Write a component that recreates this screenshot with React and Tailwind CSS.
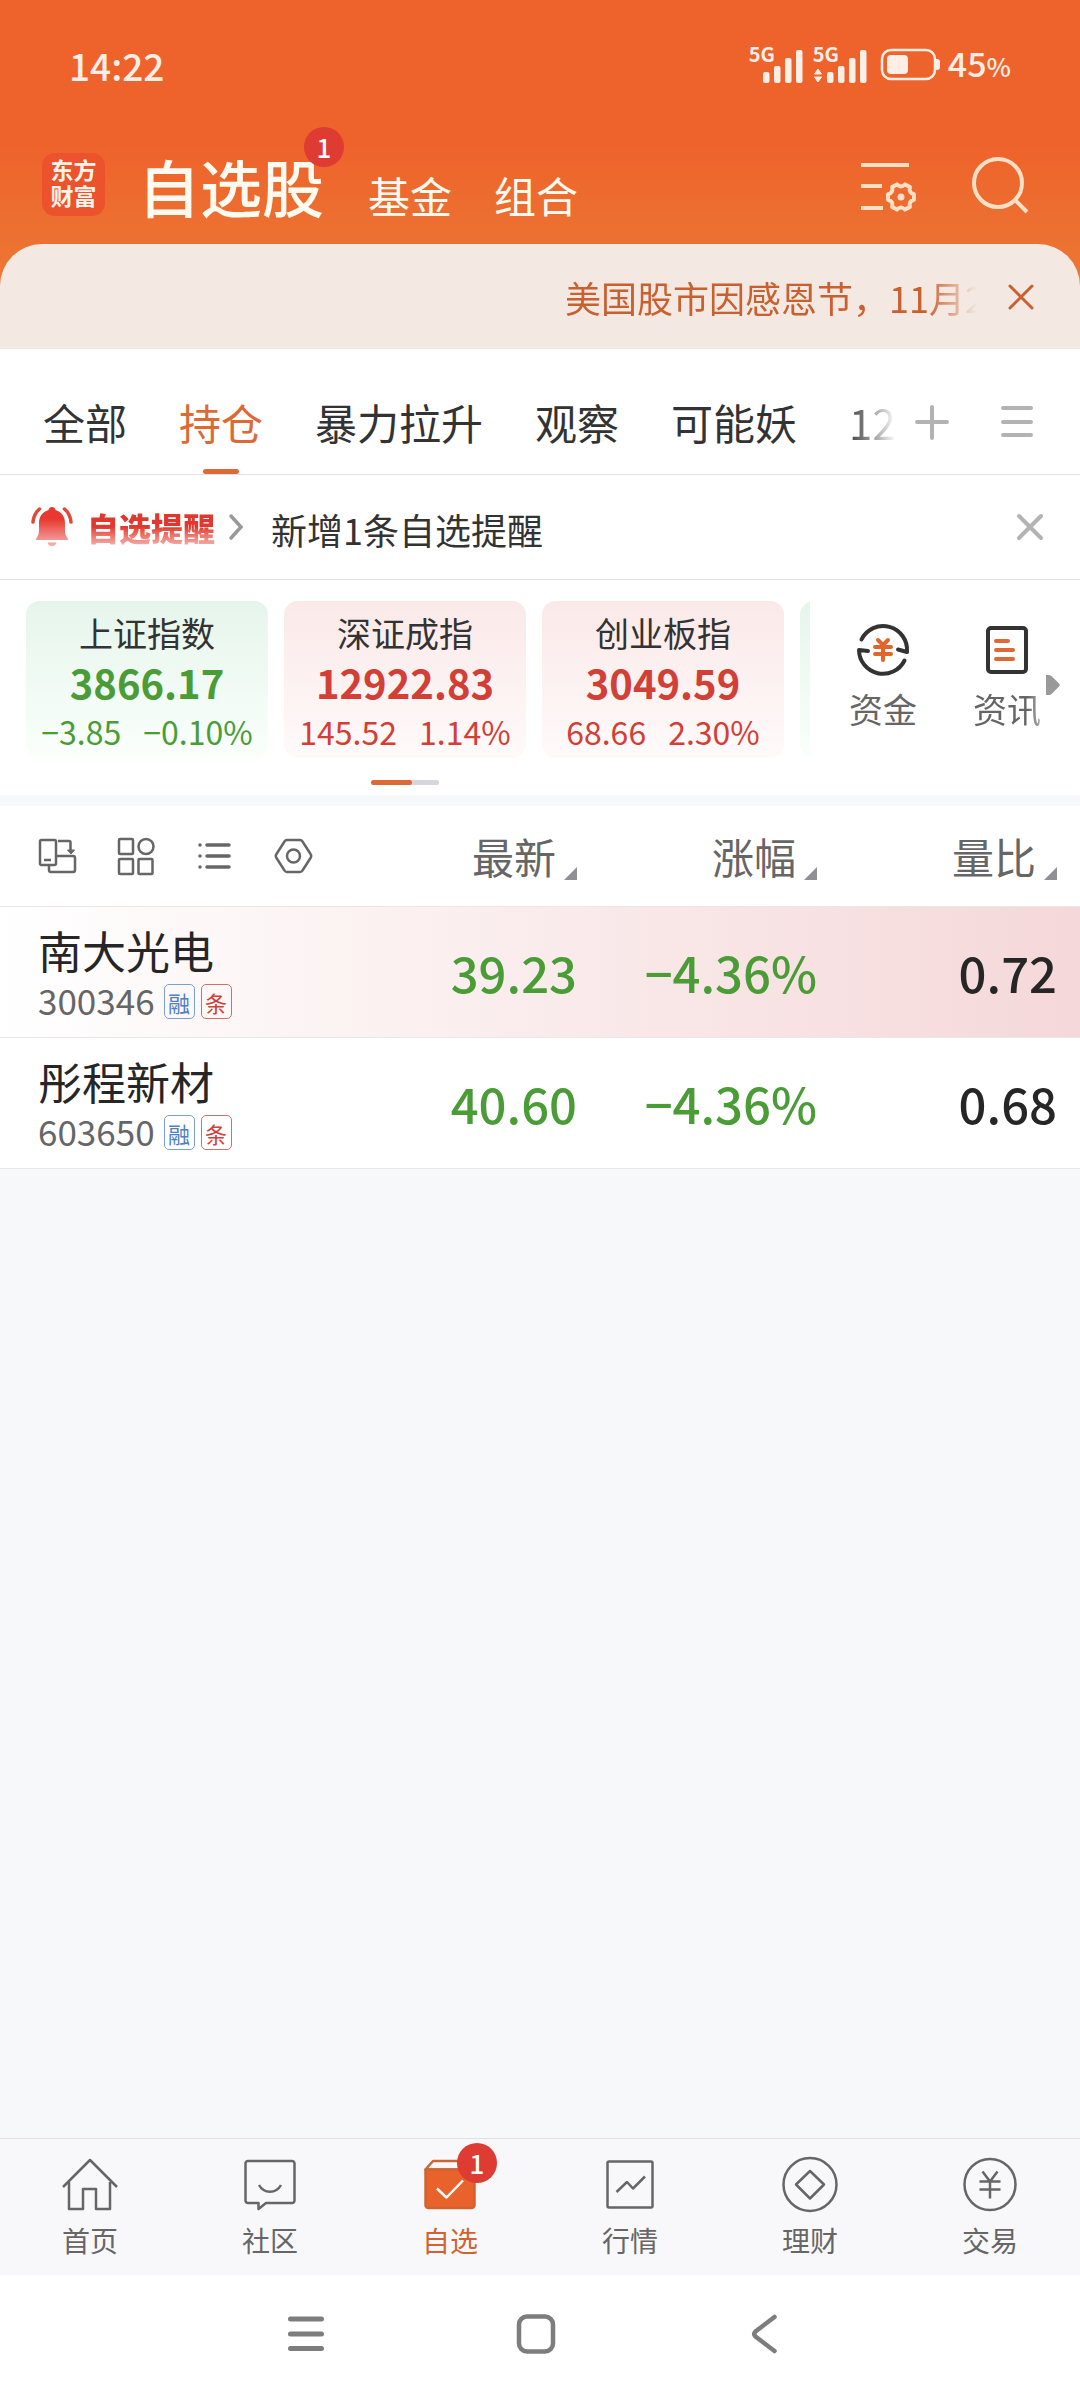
const indices = [
  { name: "上证指数", value: "3866.17", change: "−3.85", percent: "−0.10%", up: false },
  { name: "深证成指", value: "12922.83", change: "145.52", percent: "1.14%", up: true },
  { name: "创业板指", value: "3049.59", change: "68.66", percent: "2.30%", up: true },
];

const stocks = [
  { name: "南大光电", code: "300346", price: "39.23", percent: "−4.36%", ratio: "0.72", flash: true },
  { name: "彤程新材", code: "603650", price: "40.60", percent: "−4.36%", ratio: "0.68", flash: false },
];

const groups = ["全部", "持仓", "暴力拉升", "观察", "可能妖"];

function Signal({ active }) {
  return (
    <div className="relative h-9 w-[55px]">
      <span className="absolute left-0 -top-[3px] text-[20px] font-bold leading-5">5G</span>
      <svg className="absolute inset-0" width="55" height="36" viewBox="0 0 55 36" fill="currentColor" aria-hidden="true">
        {active && <path d="M5 22l3.500 5h-7zM5 35l3.500-5h-7z" stroke="currentColor" strokeLinejoin="round" />}
        <rect x="14" y="25" width="6.5" height="11" rx="2" />
        <rect x="25" y="19" width="6.5" height="17" rx="2" />
        <rect x="36" y="11" width="6.5" height="25" rx="2" />
        <rect x="47" y="3" width="6.5" height="33" rx="2" />
      </svg>
    </div>
  );
}

function StatusBar() {
  return (
    <div className="flex items-center justify-between px-[69px] pt-[41px] text-[#ffeee6]">
      <span className="text-[37px] font-medium leading-[44px]">14:22</span>
      <div className="flex items-center">
        <div className="flex gap-[9px]">
          <Signal />
          <Signal active />
        </div>
        <svg className="ml-3" width="60" height="34" viewBox="0 0 60 34" aria-hidden="true">
          <rect x="2" y="2" width="53" height="29" rx="9" fill="none" stroke="currentColor" strokeWidth="2.5" />
          <rect x="7" y="7" width="21" height="19" rx="4" fill="currentColor" />
          <path d="M56 11h1a3 3 0 0 1 3 3v5a3 3 0 0 1-3 3h-1z" fill="currentColor" />
        </svg>
        <span className="ml-2 text-[34px] font-medium leading-[44px]">
          45<span className="text-[26px]">%</span>
        </span>
      </div>
    </div>
  );
}

function Badge({ className }) {
  return (
    <span
      className={`absolute flex h-10 w-10 items-center justify-center rounded-full bg-[#de3b33] text-[26px] font-medium leading-none text-white ${className}`}
    >
      1
    </span>
  );
}

function TitleBar() {
  return (
    <div className="flex items-center pb-[13px] pl-[42px] pr-[48px] pt-[53px]">
      <div className="mb-1 flex h-[63px] w-[63px] flex-col items-center justify-center rounded-[13px] bg-[#ec522b] pb-1 text-[23px] font-bold leading-[26px] text-[#fff3ea]">
        <span>东方</span>
        <span>财富</span>
      </div>
      <nav className="ml-[33px] flex flex-1 items-baseline text-[#fffaf0]">
        <a href="#watch" className="relative text-[62px] font-medium leading-[90px]">
          自选股
          <Badge className="-top-[14px] left-[166px]" />
        </a>
        <a href="#fund" className="ml-[44px] text-[42px]">
          基金
        </a>
        <a href="#portfolio" className="ml-[42px] text-[42px]">
          组合
        </a>
      </nav>
      <button type="button" aria-label="管理" className="text-[#ffe0c6]">
        <svg width="60" height="60" viewBox="0 0 60 60" fill="none" stroke="currentColor" strokeWidth="4">
          <path d="M3 9h48M3 30h21M3 52h22" />
          <path
            d="M47 28.400L51.900 31.100Q50.400 36.800 56 38.200V43.800Q50.400 45.200 51.900 50.900L47 53.600Q43 49.500 39 53.600L34.100 50.900Q35.600 45.200 30 43.800V38.200Q35.600 36.800 34.100 31.100L39 28.400Q43 32.500 47 28.400Z"
            strokeLinejoin="round"
          />
          <circle cx="43" cy="41" r="3.5" fill="currentColor" stroke="none" />
        </svg>
      </button>
      <button type="button" aria-label="搜索" className="ml-[54px] text-[#ffe0c6]">
        <svg width="60" height="60" viewBox="0 0 60 60" fill="none" stroke="currentColor" strokeWidth="4">
          <circle cx="26" cy="27" r="24" />
          <path d="M42 43l13 13" />
        </svg>
      </button>
    </div>
  );
}

function Cross({ size, width }) {
  return (
    <svg width={size} height={size} viewBox="0 0 28 28" fill="none" stroke="currentColor" strokeWidth={width} strokeLinecap="round">
      <path d="M3 3l22 22M25 3L3 25" />
    </svg>
  );
}

function Ticker() {
  return (
    <div className="flex h-[105px] items-center rounded-t-[42px] bg-[#f3e8e2] pr-[45px] text-[#c9602f]">
      <p className="ml-auto whitespace-nowrap text-[36px] leading-[56px] [mask-image:linear-gradient(to_right,black_86%,transparent_98%)]">
        美国股市因感恩节，11月2
      </p>
      <button type="button" aria-label="关闭公告" className="ml-[22px]">
        <Cross size={28} width={3} />
      </button>
    </div>
  );
}

function GroupTabs() {
  return (
    <div className="flex h-[126px] items-center border-b border-[#e3e3e3] bg-white pt-5">
      <div className="flex h-full flex-1 gap-[52px] overflow-hidden pl-[43px] text-[42px] text-[#333]">
        {groups.map((g) => (
          <button key={g} type="button" className={`relative shrink-0 ${g === "持仓" ? "text-[#dd6a35]" : ""}`}>
            {g}
            {g === "持仓" && (
              <span className="absolute bottom-0 left-1/2 h-[5px] w-9 -translate-x-1/2 rounded-full bg-[#dd6a35]" />
            )}
          </button>
        ))}
        <button type="button" className="shrink-0 bg-linear-to-r from-[#444] to-white bg-clip-text text-transparent">
          12
        </button>
      </div>
      <button type="button" aria-label="添加分组" className="ml-4 text-[#b3b3b3]">
        <svg width="38" height="38" viewBox="0 0 38 38" fill="none" stroke="currentColor" strokeWidth="4" strokeLinecap="round">
          <path d="M19 4v31M4 19h30" />
        </svg>
      </button>
      <button type="button" aria-label="分组列表" className="ml-12 mr-[45px] text-[#b3b3b3]">
        <svg width="36" height="38" viewBox="0 0 36 38" fill="none" stroke="currentColor" strokeWidth="4" strokeLinecap="round">
          <path d="M4 5h28M4 19h28M4 32h28" />
        </svg>
      </button>
    </div>
  );
}

function AlertRow() {
  return (
    <div className="flex h-[105px] items-center border-b border-[#e3e3e3] bg-white pl-[30px] pr-9">
      <svg width="44" height="44" viewBox="0 0 44 44" aria-hidden="true">
        <defs>
          <linearGradient id="bell" x1="0" y1="0" x2="0" y2="1">
            <stop offset="0.3" stopColor="#e8382f" />
            <stop offset="1" stopColor="#f3b5b2" />
          </linearGradient>
        </defs>
        <path
          d="M22 2c2 0 3 1 3.500 3C32 7 35 12 35 18v8c0 4 2 6 3.500 9h-33C7 32 9 30 9 26v-8c0-6 3-11 9.500-13C19 3 20 2 22 2zM17.500 37.500h9c-1 5-8 5-9 0z"
          fill="url(#bell)"
        />
        <path d="M9.500 4C6 7 3.500 12 3 17M34.500 4C38 7 40.500 12 41 17" fill="none" stroke="#dd4a3c" strokeWidth="3.5" strokeLinecap="round" />
      </svg>
      <span className="ml-[13px] bg-linear-to-b from-[#e0382e] from-50% to-[#f3b5b2] to-95% bg-clip-text text-[32px] font-black leading-[44px] text-transparent">
        自选提醒
      </span>
      <svg className="ml-[13px]" width="16" height="28" viewBox="0 0 16 28" fill="none" stroke="#999" strokeWidth="3.5" strokeLinecap="round">
        <path d="M3 3l10 11L3 25" />
      </svg>
      <a href="#alerts" className="ml-[27px] flex-1 pt-1 text-[36px] text-[#333]">
        新增1条自选提醒
      </a>
      <button type="button" aria-label="关闭提醒" className="text-[#b3b3b3]">
        <Cross size={28} width={4} />
      </button>
    </div>
  );
}

function IndexCard({ item }) {
  return (
    <a
      href="#index"
      className={`flex w-[242px] shrink-0 flex-col items-center rounded-[14px] bg-linear-to-b pt-[9px] ${
        item.up ? "from-[#fae9e8] to-[#fffafa] text-[#d23f37]" : "from-[#e6f5ec] to-[#fafffb] text-[#4a9c37]"
      }`}
    >
      <span className="text-[34px] leading-[46px] text-[#333]">{item.name}</span>
      <span className="text-[40px] font-bold leading-[52px]">{item.value}</span>
      <span className="flex gap-[22px] text-[32px] leading-[46px]">
        <span>{item.change}</span>
        <span>{item.percent}</span>
      </span>
    </a>
  );
}

function IndexStrip() {
  return (
    <section className="flex bg-white">
      <div className="flex-1 overflow-hidden pl-[26px] pt-[21px]">
        <div className="flex h-[157px] gap-4">
          {indices.map((item) => (
            <IndexCard key={item.name} item={item} />
          ))}
          <div className="w-[242px] shrink-0 rounded-[14px] bg-linear-to-b from-[#e6f5ec] to-[#fafffb]" />
        </div>
        <div className="mb-[10px] mr-[26px] mt-[22px] flex justify-center">
          <div className="h-[5px] w-[68px] rounded-full bg-[#d5d5db]">
            <div className="h-full w-[41px] rounded-full bg-[#dd6a35]" />
          </div>
        </div>
      </div>
      <div className="relative flex w-[270px] shrink-0 gap-14 pl-[39px] pt-[42px] text-[34px] leading-[44px] text-[#666]">
        <a href="#money" className="flex flex-col items-center">
          <svg width="56" height="56" viewBox="0 0 56 56" fill="none" stroke="#333" strokeWidth="4" strokeLinecap="round" strokeLinejoin="round">
            <path d="M6.500 17.500A24 24 0 0 1 52 30l-9-2.500M49.500 38.500A24 24 0 0 1 4 28l9 1" />
            <path d="M23 18l5 5 5-5M20 25h16M20 32h16M28 24v14" stroke="#e2652c" />
          </svg>
          <span className="mt-[9px]">资金</span>
        </a>
        <a href="#news" className="flex flex-col items-center [mask-image:linear-gradient(to_right,black_80%,#0008)]">
          <svg width="56" height="56" viewBox="0 0 56 56" fill="none" stroke="#333" strokeWidth="4" strokeLinecap="round" strokeLinejoin="round">
            <rect x="9" y="6" width="38" height="44" rx="3" />
            <path d="M17 19h12M17 28h17M17 37h17" stroke="#dd6a35" />
          </svg>
          <span className="mt-[9px]">资讯</span>
        </a>
        <svg className="absolute right-5 top-[94px]" width="14" height="22" viewBox="0 0 14 22" fill="#999" aria-hidden="true">
          <path d="M0 1h3c1 0 2 .5 3 1.500l7 7c1 1 1 2 0 3l-7 7c-1 1-2 1.500-3 1.500H0z" />
        </svg>
      </div>
    </section>
  );
}

function Tag({ children, className }) {
  return (
    <span className={`mt-1 flex h-[35px] w-[31px] items-center justify-center rounded-[5px] border text-[22px] leading-none ${className}`}>
      {children}
    </span>
  );
}

function SortHeader({ label }) {
  return (
    <th className="w-[240px] pr-[23px] font-normal">
      <button type="button" className="flex w-full items-end justify-end gap-[8px]">
        <span className="text-[42px] leading-[56px]">{label}</span>
        <svg className="mb-1" width="13" height="13" viewBox="0 0 13 13" fill="#8f8f94" aria-hidden="true">
          <path d="M13 0v13H0z" />
        </svg>
      </button>
    </th>
  );
}

function StockTable() {
  return (
    <table className="mt-[11px] w-full table-fixed border-collapse bg-white">
      <thead>
        <tr className="h-[100px] border-b border-[#e8e8e8] text-[#666]">
          <th className="pl-[37px]">
            <div className="flex items-center gap-[39px]">
              <button type="button" aria-label="横屏">
                <svg width="40" height="40" viewBox="0 0 40 40" fill="none" stroke="currentColor" strokeWidth="2.5" strokeLinejoin="round">
                  <rect x="3" y="4" width="16" height="25" rx="1.5" />
                  <path d="M7 24h7M21 5h11a1.500 1.500 0 0 1 1.500 1.500V15M12 30v4a2 2 0 0 0 2 2h22a2 2 0 0 0 2-2V22a2 2 0 0 0-2-2H19" />
                  <path d="M30.500 14h7l-3.500 4z" fill="currentColor" strokeWidth="1" />
                </svg>
              </button>
              <button type="button" aria-label="宫格">
                <svg width="40" height="40" viewBox="0 0 40 40" fill="none" stroke="currentColor" strokeWidth="2.5" strokeLinejoin="round">
                  <rect x="3" y="3" width="14" height="15" rx="1" />
                  <circle cx="30" cy="10.5" r="7.5" />
                  <rect x="3" y="23" width="14" height="15" rx="1" />
                  <rect x="22.5" y="23" width="14" height="15" rx="1" />
                </svg>
              </button>
              <button type="button" aria-label="列表">
                <svg width="40" height="40" viewBox="0 0 40 40" fill="none" stroke="currentColor" strokeWidth="3.5" strokeLinecap="round">
                  <path d="M12 9h22M12 20h22M12 31h22M5 9v.1M5 20v.1M5 31v.1" />
                </svg>
              </button>
              <button type="button" aria-label="设置">
                <svg width="40" height="40" viewBox="0 0 40 40" fill="none" stroke="currentColor" strokeWidth="2.5" strokeLinejoin="round">
                  <path d="M13 4h13a3 3 0 0 1 2.500 1.500l8 12.500a3.500 3.500 0 0 1 0 4l-8 12.500A3 3 0 0 1 26 36H13a3 3 0 0 1-2.500-1.500l-8-12.500a3.500 3.500 0 0 1 0-4l8-12.500A3 3 0 0 1 13 4z" />
                  <circle cx="19.5" cy="20" r="6.5" />
                </svg>
              </button>
            </div>
          </th>
          <SortHeader label="最新" />
          <SortHeader label="涨幅" />
          <SortHeader label="量比" />
        </tr>
      </thead>
      <tbody>
        {stocks.map((s) => (
          <tr
            key={s.code}
            className={`h-[131px] border-b border-[#e8e8e8] text-right text-[49px] font-medium text-[#4a9c37] ${
              s.flash ? "bg-linear-to-r from-white to-[#f5d8d9]" : ""
            }`}
          >
            <td className="pl-[38px] pt-[6px] text-left font-normal">
              <div className="text-[44px] leading-[50px] text-[#262626]">{s.name}</div>
              <div className="flex items-center text-[35px] leading-[50px] text-[#666]">
                {s.code}
                <Tag className="ml-[9px] border-[#7ba0cf] text-[#4c7fc4]">融</Tag>
                <Tag className="ml-[6px] border-[#d0706a] text-[#cf4039]">条</Tag>
              </div>
            </td>
            <td className="pr-[23px]">{s.price}</td>
            <td className="pr-[23px]">{s.percent}</td>
            <td className="pr-[23px] text-[#262626]">{s.ratio}</td>
          </tr>
        ))}
      </tbody>
    </table>
  );
}

const navItems = [
  {
    label: "首页",
    icon: <path d="M3 31L30 4l27 27M9 26v27h14V33h13v20h14V26" />,
  },
  {
    label: "社区",
    icon: (
      <>
        <path d="M8 5h44a2.500 2.500 0 0 1 2.500 2.500v37A2.500 2.500 0 0 1 52 47H26l-7.500 6V47H8a2.500 2.500 0 0 1-2.500-2.500v-37A2.500 2.500 0 0 1 8 5z" />
        <path d="M19 29c5 9 17 9 22 0" />
      </>
    ),
  },
  {
    label: "自选",
    active: true,
    icon: (
      <>
        <path d="M5.500 13.500L13 5h34l7.500 8.500z" />
        <path d="M5.500 13.500h49V49a3 3 0 0 1-3 3h-43a3 3 0 0 1-3-3z" fill="#ea622b" />
        <path d="M17 32.500l9.500 9L43 24.500" stroke="#fff" />
      </>
    ),
  },
  {
    label: "行情",
    icon: (
      <>
        <rect x="7.5" y="5.5" width="45" height="46" rx="1.5" />
        <path d="M16.500 36L27 26l6 6.500L45 20.500" />
      </>
    ),
  },
  {
    label: "理财",
    icon: (
      <>
        <circle cx="30" cy="28.5" r="26.5" />
        <path d="M30 15l14 13.500L30 42.500 16 28.500z" />
      </>
    ),
  },
  {
    label: "交易",
    icon: (
      <>
        <circle cx="30" cy="28.5" r="25.5" />
        <path d="M22.500 15.500L30 25.500l7.500-10M19.500 25.500h21M19.500 33.500h21M30 25.500v17" />
      </>
    ),
  },
];

function BottomNav() {
  return (
    <nav className="grid h-[137px] grid-cols-6 border-t border-[#e0e0e3] bg-[#f8f8fb]">
      {navItems.map((item) => (
        <a
          key={item.label}
          href="#nav"
          className={`flex flex-col items-center pt-[17px] text-[28px] leading-[40px] ${item.active ? "text-[#cf6431]" : "text-[#666]"}`}
        >
          <span className="relative">
            <svg width="60" height="60" viewBox="0 0 60 60" fill="none" stroke="currentColor" strokeWidth="2.5" strokeLinejoin="round">
              {item.icon}
            </svg>
            {item.active && <Badge className="-top-[13px] left-[37px]" />}
          </span>
          <span className="mt-1">{item.label}</span>
        </a>
      ))}
    </nav>
  );
}

function SystemNav() {
  return (
    <div className="flex h-[125px] justify-center gap-[186px] bg-white pr-2 pt-[37px] text-[#7d7d7d]">
      <button type="button" aria-label="最近任务" className="h-11">
        <svg width="44" height="44" viewBox="0 0 44 44" fill="none" stroke="currentColor" strokeWidth="5" strokeLinecap="round">
          <path d="M6.500 7h31M6.500 22h31M6.500 36.500h31" />
        </svg>
      </button>
      <button type="button" aria-label="主屏幕" className="h-11">
        <svg width="44" height="44" viewBox="0 0 44 44" fill="none" stroke="currentColor" strokeWidth="4.5">
          <rect x="5" y="4.5" width="34" height="35" rx="8" />
        </svg>
      </button>
      <button type="button" aria-label="返回" className="h-11">
        <svg width="44" height="44" viewBox="0 0 44 44" fill="none" stroke="currentColor" strokeWidth="4.5" strokeLinecap="round">
          <path d="M30.500 5L11.500 19.500q-2.500 2.500 0 5L30.500 39" />
        </svg>
      </button>
    </div>
  );
}

export default function App() {
  return (
    <div className="flex min-h-screen flex-col bg-[#f7f8fa] font-['Noto_Sans_CJK_SC',sans-serif]">
      <header className="bg-linear-to-b from-[#ee622b] from-40% to-[#eb7c36] to-90%">
        <StatusBar />
        <TitleBar />
        <Ticker />
      </header>
      <main className="flex-1">
        <GroupTabs />
        <AlertRow />
        <IndexStrip />
        <StockTable />
      </main>
      <BottomNav />
      <SystemNav />
    </div>
  );
}
